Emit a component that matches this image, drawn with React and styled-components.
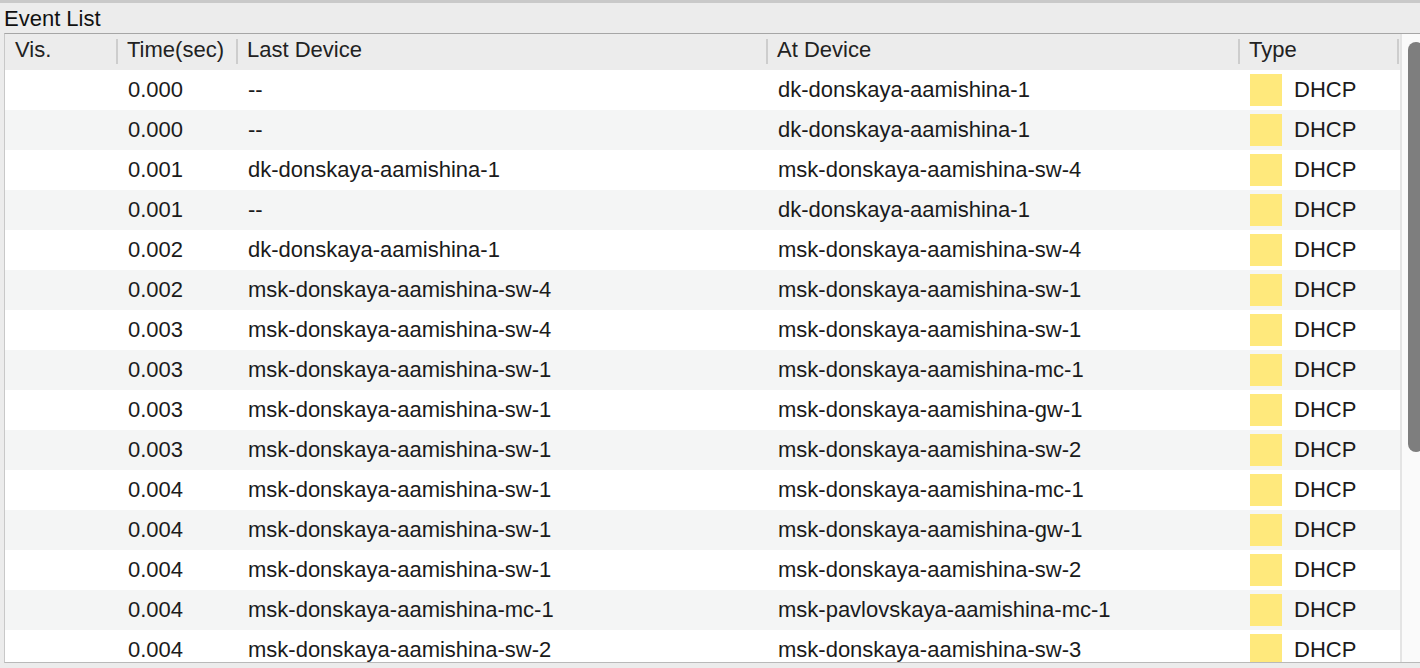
import React from 'react';
import styled, { createGlobalStyle } from 'styled-components';

const GlobalStyle = createGlobalStyle`
  html, body {
    margin: 0;
    padding: 0;
    background: #ececec;
  }
  body {
    font-family: "Liberation Sans", Arial, Helvetica, sans-serif;
    color: #1b1b1b;
  }
`;

const COLS = '112px 120px 530px 472px 161px';

const Page = styled.div`
  width: 1420px;
  height: 668px;
  display: flex;
  flex-direction: column;
  overflow: hidden;
  background: #ececec;
`;

const TitleBar = styled.div`
  border-top: 3px solid #c9c9c9;
  padding: 3px 0 2px 4px;
  font-size: 22px;
  line-height: 25px;
  color: #111;
`;

const Frame = styled.div`
  margin-left: 4px;
  height: 628px;
  border-top: 1px solid #a6a6a6;
  border-left: 1px solid #c8c8c8;
  border-bottom: 1px solid #b9b9b9;
  display: flex;
  overflow: hidden;
`;

const TableArea = styled.div`
  width: 1395px;
  display: flex;
  flex-direction: column;
  background: #fff;
  overflow: hidden;
`;

const HeaderRow = styled.div`
  display: grid;
  grid-template-columns: ${COLS};
  height: 36px;
  background: #ececec;
  flex-shrink: 0;
`;

const HeaderCell = styled.div`
  position: relative;
  padding: 3px 0 0 10px;
  font-size: 22px;
  line-height: 25px;
  color: #222;
  white-space: nowrap;

  &::after {
    content: '';
    position: absolute;
    top: 5px;
    bottom: 6px;
    right: ${(p) => (p.$last ? '1px' : '-1px')};
    width: 2px;
    background: #cdcdcd;
  }
`;

const Row = styled.div`
  display: grid;
  grid-template-columns: ${COLS};
  height: 40px;
  flex-shrink: 0;
  align-items: center;
  background: ${(p) => (p.$alt ? '#f4f5f5' : '#ffffff')};
`;

const Cell = styled.div`
  padding: 0 0 2px 11px;
  font-size: 22px;
  line-height: 25px;
  white-space: nowrap;
  overflow: hidden;
`;

const TypeCell = styled.div`
  display: flex;
  align-items: center;
  gap: 12px;
  padding-left: 11px;
  font-size: 22px;
  line-height: 25px;
`;

const TypeLabel = styled.span`
  padding-bottom: 2px;
`;

const Swatch = styled.span`
  width: 32px;
  height: 32px;
  background: ${(p) => p.$color};
  flex-shrink: 0;
`;

const ScrollTrack = styled.div`
  width: 20px;
  flex-shrink: 0;
  background: #fafafa;
  border-left: 2px solid #e4e4e4;
  box-sizing: border-box;
  padding: 8px 0 0 6px;
  overflow: hidden;
`;

const Thumb = styled.div`
  width: 16px;
  height: 410px;
  border-radius: 8px;
  background: #7e7e7e;
`;

const columns = ['Vis.', 'Time(sec)', 'Last Device', 'At Device', 'Type'];

const events = [
  ['0.000', '--', 'dk-donskaya-aamishina-1'],
  ['0.000', '--', 'dk-donskaya-aamishina-1'],
  ['0.001', 'dk-donskaya-aamishina-1', 'msk-donskaya-aamishina-sw-4'],
  ['0.001', '--', 'dk-donskaya-aamishina-1'],
  ['0.002', 'dk-donskaya-aamishina-1', 'msk-donskaya-aamishina-sw-4'],
  ['0.002', 'msk-donskaya-aamishina-sw-4', 'msk-donskaya-aamishina-sw-1'],
  ['0.003', 'msk-donskaya-aamishina-sw-4', 'msk-donskaya-aamishina-sw-1'],
  ['0.003', 'msk-donskaya-aamishina-sw-1', 'msk-donskaya-aamishina-mc-1'],
  ['0.003', 'msk-donskaya-aamishina-sw-1', 'msk-donskaya-aamishina-gw-1'],
  ['0.003', 'msk-donskaya-aamishina-sw-1', 'msk-donskaya-aamishina-sw-2'],
  ['0.004', 'msk-donskaya-aamishina-sw-1', 'msk-donskaya-aamishina-mc-1'],
  ['0.004', 'msk-donskaya-aamishina-sw-1', 'msk-donskaya-aamishina-gw-1'],
  ['0.004', 'msk-donskaya-aamishina-sw-1', 'msk-donskaya-aamishina-sw-2'],
  ['0.004', 'msk-donskaya-aamishina-mc-1', 'msk-pavlovskaya-aamishina-mc-1'],
  ['0.004', 'msk-donskaya-aamishina-sw-2', 'msk-donskaya-aamishina-sw-3'],
];

const App = () => {
  return (
    <Page>
      <GlobalStyle />
      <TitleBar>Event List</TitleBar>
      <Frame>
        <TableArea>
          <HeaderRow>
            {columns.map((c, i) => (
              <HeaderCell key={c} $last={i === columns.length - 1}>{c}</HeaderCell>
            ))}
          </HeaderRow>
          {events.map(([time, last, at], i) => (
            <Row key={i} $alt={i % 2 === 1}>
              <Cell />
              <Cell>{time}</Cell>
              <Cell>{last}</Cell>
              <Cell>{at}</Cell>
              <TypeCell>
                <Swatch $color="#ffe97c" />
                <TypeLabel>DHCP</TypeLabel>
              </TypeCell>
            </Row>
          ))}
        </TableArea>
        <ScrollTrack>
          <Thumb />
        </ScrollTrack>
      </Frame>
    </Page>
  );
};

export default App;
